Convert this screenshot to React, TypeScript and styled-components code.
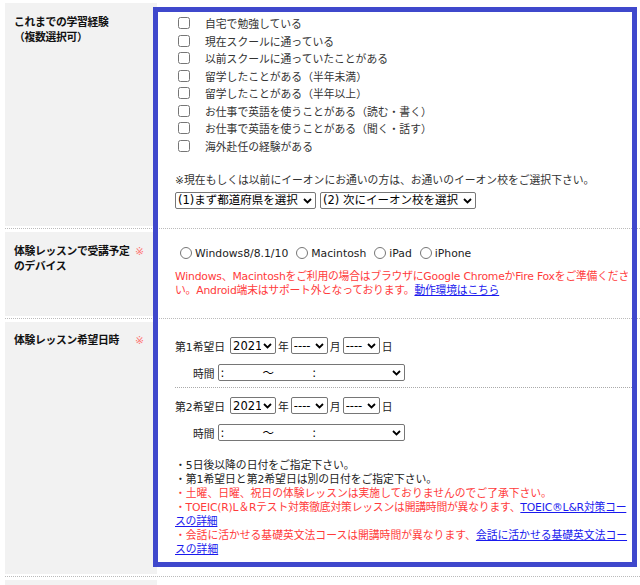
import React from 'react'
import styled, { createGlobalStyle } from 'styled-components'

const GlobalStyle = createGlobalStyle`
    body {
        margin: 0;
        background: #fff;
        font-family: 'DejaVu Sans', 'Noto Sans CJK JP', sans-serif;
        font-size: 10.8px;
        color: #333;
    }
`

const FormPage = styled.div`
    position: relative;
    width: 640px;
    box-sizing: border-box;
    padding: 3px 0 0 5px;
`

// blue marker box drawn over the answer column
const Highlight = styled.div`
    position: absolute;
    left: 153px;
    top: 7px;
    width: 484px;
    height: 560px;
    box-sizing: border-box;
    border: 5.5px solid #3f48cc;
    pointer-events: none;
`

const Row = styled.div`
    display: flex;
    padding-bottom: 2px;
    margin-bottom: 3px;
    border-bottom: 1px dotted #bbb;
`

const Label = styled.div<{ $h?: number }>`
    width: 152px;
    flex: none;
    box-sizing: border-box;
    ${(p) => (p.$h ? `height: ${p.$h}px;` : '')}
    background: #f2f2f2;
    padding: 11.5px 13px 0 9px;
    display: flex;
    align-items: flex-start;
    gap: 3px;
    font-weight: bold;
    color: #111;
    line-height: 15px;
    letter-spacing: -0.3px;
`

const LabelText = styled.div`
    flex: 1;
`

const Required = styled.span`
    color: #ff7676;
    font-weight: normal;
    letter-spacing: 0;
`

const Value = styled.div<{ $top: number; $bottom: number }>`
    flex: 1;
    min-width: 0;
    padding: ${(p) => p.$top}px 6px ${(p) => p.$bottom}px 18px;
`

const CheckList = styled.div`
    display: flex;
    flex-direction: column;
`

const CheckItem = styled.label`
    display: flex;
    align-items: center;
    height: 17.5px;
`

const CheckBox = styled.input.attrs({ type: 'checkbox' })`
    width: 12px;
    height: 12px;
    margin: 0 15px 0 3px;
`

const Notice = styled.p`
    margin: 18.25px 0 4px;
    line-height: 15px;
`

const SelectRow = styled.div`
    display: flex;
    align-items: center;
    gap: 4px;
`

const SelectWrap = styled.span`
    position: relative;
    display: inline-flex;
    flex: none;
`

const Select = styled.select<{ $w: number }>`
    appearance: none;
    width: ${(p) => p.$w}px;
    height: 17px;
    box-sizing: border-box;
    padding: 0 14px 0 2px;
    border: 1px solid #767676;
    border-radius: 2px;
    background: #fff;
    color: #000;
    font-family: 'DejaVu Sans', 'Noto Sans CJK JP', sans-serif;
    font-size: 11.5px;
`

const Chevron = styled.svg`
    position: absolute;
    right: 4px;
    top: 6px;
    width: 9px;
    height: 6px;
    pointer-events: none;
`

const DropDown = ({ width, text }: { width: number; text: string }) => (
    <SelectWrap>
        <Select $w={width}>
            <option>{text}</option>
        </Select>
        <Chevron viewBox={'0 0 9 6'}>
            <path d={'M1 1 L4.5 4.5 L8 1'} fill={'none'} stroke={'#000'} strokeWidth={1.8} />
        </Chevron>
    </SelectWrap>
)

const RadioGroup = styled.div`
    display: flex;
    align-items: center;
    height: 16px;
`

const RadioItem = styled.label`
    display: flex;
    align-items: center;
    margin-right: 3px;
    color: #222;
`

const Radio = styled.input.attrs({ type: 'radio' })`
    width: 12px;
    height: 12px;
    margin: 0 3px 0 5px;
`

const Warning = styled.p`
    margin: 8.75px 0 0;
    line-height: 14.5px;
    letter-spacing: -0.2px;
    color: #ff3b3b;
`

const Link = styled.a`
    color: #1a1aee;
    text-decoration: underline;
`

const DateLine = styled.div`
    display: flex;
    align-items: center;
    gap: 2px;
    height: 17px;
    color: #222;
`

const DateLabel = styled.span`
    margin-right: 3px;
`

const TimeLine = styled.div`
    display: flex;
    align-items: center;
    gap: 3px;
    height: 17px;
    margin-top: 10px;
    padding-left: 18px;
    color: #222;
`

const Divider = styled.div`
    margin: 5.5px 0 9.5px;
    border-top: 1px dotted #aaa;
`

const Notes = styled.div`
    margin-top: 17.5px;
    line-height: 14px;
`

const Note = styled.div<{ $alert?: boolean; $tracking?: number }>`
    color: ${(p) => (p.$alert ? '#ff3b3b' : '#222')};
    letter-spacing: ${(p) => p.$tracking ?? 0}px;
`

const experiences = [
    '自宅で勉強している',
    '現在スクールに通っている',
    '以前スクールに通っていたことがある',
    '留学したことがある（半年未満）',
    '留学したことがある（半年以上）',
    'お仕事で英語を使うことがある（読む・書く）',
    'お仕事で英語を使うことがある（聞く・話す）',
    '海外赴任の経験がある',
]

const devices = ['Windows8/8.1/10', 'Macintosh', 'iPad', 'iPhone']

const TIME_PLACEHOLDER = ':\u3000\u3000\u3000 〜\u3000\u3000\u3000 :'

const WishDate = ({ index }: { index: number }) => (
    <>
        <DateLine>
            <DateLabel>第{index}希望日</DateLabel>
            <DropDown width={46} text={'2021'} />
            年
            <DropDown width={37} text={'----'} />
            月
            <DropDown width={37} text={'----'} />
            日
        </DateLine>
        <TimeLine>
            時間
            <DropDown width={187} text={TIME_PLACEHOLDER} />
        </TimeLine>
    </>
)

const App = () => {
    return (
        <FormPage>
            <GlobalStyle />
            <Row>
                <Label>
                    <LabelText>
                        これまでの学習経験
                        <br />
                        （複数選択可）
                    </LabelText>
                </Label>
                <Value $top={11.25} $bottom={17.5}>
                    <CheckList>
                        {experiences.map((item) => (
                            <CheckItem key={item}>
                                <CheckBox />
                                {item}
                            </CheckItem>
                        ))}
                    </CheckList>
                    <Notice>
                        ※現在もしくは以前にイーオンにお通いの方は、お通いのイーオン校をご選択下さい。
                    </Notice>
                    <SelectRow>
                        <DropDown width={141} text={'(1)まず都道府県を選択'} />
                        <DropDown width={156} text={'(2) 次にイーオン校を選択'} />
                    </SelectRow>
                </Value>
            </Row>
            <Row>
                <Label>
                    <LabelText>体験レッスンで受講予定のデバイス</LabelText>
                    <Required>※</Required>
                </Label>
                <Value $top={13} $bottom={17}>
                    <RadioGroup>
                        {devices.map((device) => (
                            <RadioItem key={device}>
                                <Radio name={'device'} />
                                {device}
                            </RadioItem>
                        ))}
                    </RadioGroup>
                    <Warning>
                        Windows、Macintoshをご利用の場合はブラウザにGoogle ChromeかFire
                        Foxをご準備ください。Android端末はサポート外となっております。
                        <Link href={'#'}>動作環境はこちら</Link>
                    </Warning>
                </Value>
            </Row>
            <Row>
                <Label>
                    <LabelText>体験レッスン希望日時</LabelText>
                    <Required>※</Required>
                </Label>
                <Value $top={15.5} $bottom={17}>
                    <WishDate index={1} />
                    <Divider />
                    <WishDate index={2} />
                    <Notes>
                        <Note>・5日後以降の日付をご指定下さい。</Note>
                        <Note>・第1希望日と第2希望日は別の日付をご指定下さい。</Note>
                        <Note $alert>
                            ・土曜、日曜、祝日の体験レッスンは実施しておりませんのでご了承下さい。
                        </Note>
                        <Note $alert $tracking={-0.2}>
                            ・TOEIC(R)L＆Rテスト対策徹底対策レッスンは開講時間が異なります、
                            <Link href={'#'}>TOEIC®L&amp;R対策コースの詳細</Link>
                        </Note>
                        <Note $alert>
                            ・会話に活かせる基礎英文法コースは開講時間が異なります、
                            <Link href={'#'}>会話に活かせる基礎英文法コースの詳細</Link>
                        </Note>
                    </Notes>
                </Value>
            </Row>
            <Row>
                <Label $h={5} />
            </Row>
            <Highlight />
        </FormPage>
    )
}

export default App
